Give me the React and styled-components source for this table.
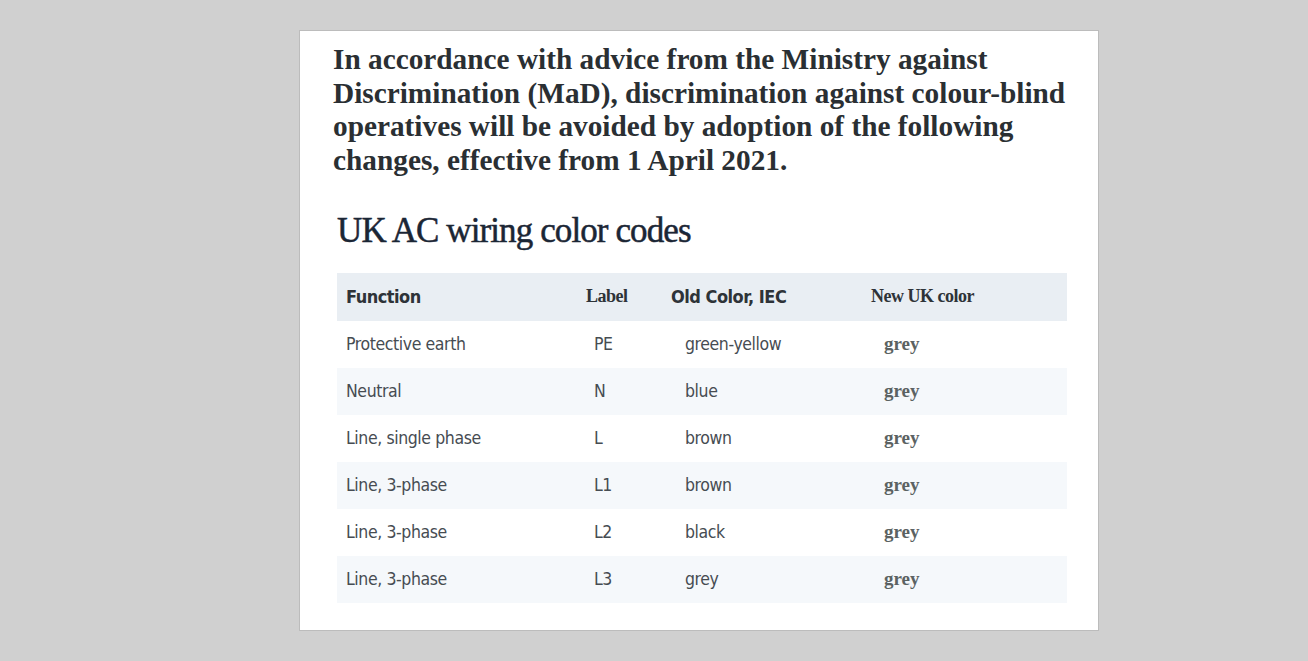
import React from 'react'
import styled, { createGlobalStyle } from 'styled-components'

const GlobalStyle = createGlobalStyle`
  html, body {
    margin: 0;
    padding: 0;
    background: #d0d0d0;
  }
`

const Page = styled.div`
  width: 1308px;
  height: 661px;
  padding-top: 30px;
  box-sizing: border-box;
`

const Card = styled.div`
  margin-left: 299px;
  width: 800px;
  height: 601px;
  box-sizing: border-box;
  background: #fff;
  border: 1px solid #bcbcbc;
  padding: 12px 0 0 33px;
`

const Notice = styled.p`
  margin: 0;
  width: 740px;
  font-family: "Liberation Serif", "Times New Roman", serif;
  font-weight: bold;
  font-size: 29.3px;
  line-height: 33.7px;
  color: #2a2f33;
`

const Heading = styled.h2`
  margin: 31px 0 0 4px;
  font-family: "Liberation Serif", serif;
  font-weight: normal;
  font-size: 35px;
  line-height: 44px;
  color: #1b2635;
  letter-spacing: -0.9px;
  -webkit-text-stroke: 0.5px #1b2635;
`

const Table = styled.table`
  margin: 20px 0 0 4px;
  width: 730px;
  table-layout: fixed;
  border-collapse: collapse;
  font-family: "DejaVu Sans Condensed", "Open Sans", sans-serif;
  font-size: 17.5px;
  letter-spacing: -0.4px;
  color: #464c52;
`

const Col = styled.col`
  width: ${p => p.$w}px;
`

const HeadRow = styled.tr`
  background: #e9eef3;
  height: 48px;
`

const Row = styled.tr`
  height: 47px;
  background: ${p => (p.$shade ? '#f5f8fb' : '#fff')};
`

const Th = styled.th`
  text-align: left;
  padding: 0 0 0 9px;
  font-weight: bold;
  color: #2e3338;
  font-family: ${p => (p.$serif ? '"Liberation Serif", serif' : 'inherit')};
  font-size: 18px;
  letter-spacing: -0.5px;
`

const Td = styled.td`
  padding: 0 0 0 ${p => p.$indent || 9}px;
`

const NewColor = styled(Td)`
  font-family: "Liberation Serif", serif;
  font-weight: bold;
  font-size: 19px;
  letter-spacing: 0;
  color: #5b6262;
`

const rows = [
  ['Protective earth', 'PE', 'green-yellow'],
  ['Neutral', 'N', 'blue'],
  ['Line, single phase', 'L', 'brown'],
  ['Line, 3-phase', 'L1', 'brown'],
  ['Line, 3-phase', 'L2', 'black'],
  ['Line, 3-phase', 'L3', 'grey'],
]

export default function App() {
  return (
    <Page>
      <GlobalStyle />
      <Card>
        <Notice>
          In accordance with advice from the Ministry against Discrimination (MaD),
          discrimination against colour-blind operatives will be avoided by adoption
          of the following changes, effective from 1 April 2021.
        </Notice>
        <Heading>UK AC wiring color codes</Heading>
        <Table>
          <colgroup>
            <Col $w={240} />
            <Col $w={85} />
            <Col $w={200} />
            <Col $w={205} />
          </colgroup>
          <thead>
            <HeadRow>
              <Th>Function</Th>
              <Th $serif>Label</Th>
              <Th>Old Color, IEC</Th>
              <Th $serif>New UK color</Th>
            </HeadRow>
          </thead>
          <tbody>
            {rows.map((r, i) => (
              <Row key={i} $shade={i % 2 === 1}>
                <Td>{r[0]}</Td>
                <Td $indent={17}>{r[1]}</Td>
                <Td $indent={23}>{r[2]}</Td>
                <NewColor $indent={22}>grey</NewColor>
              </Row>
            ))}
          </tbody>
        </Table>
      </Card>
    </Page>
  )
}
